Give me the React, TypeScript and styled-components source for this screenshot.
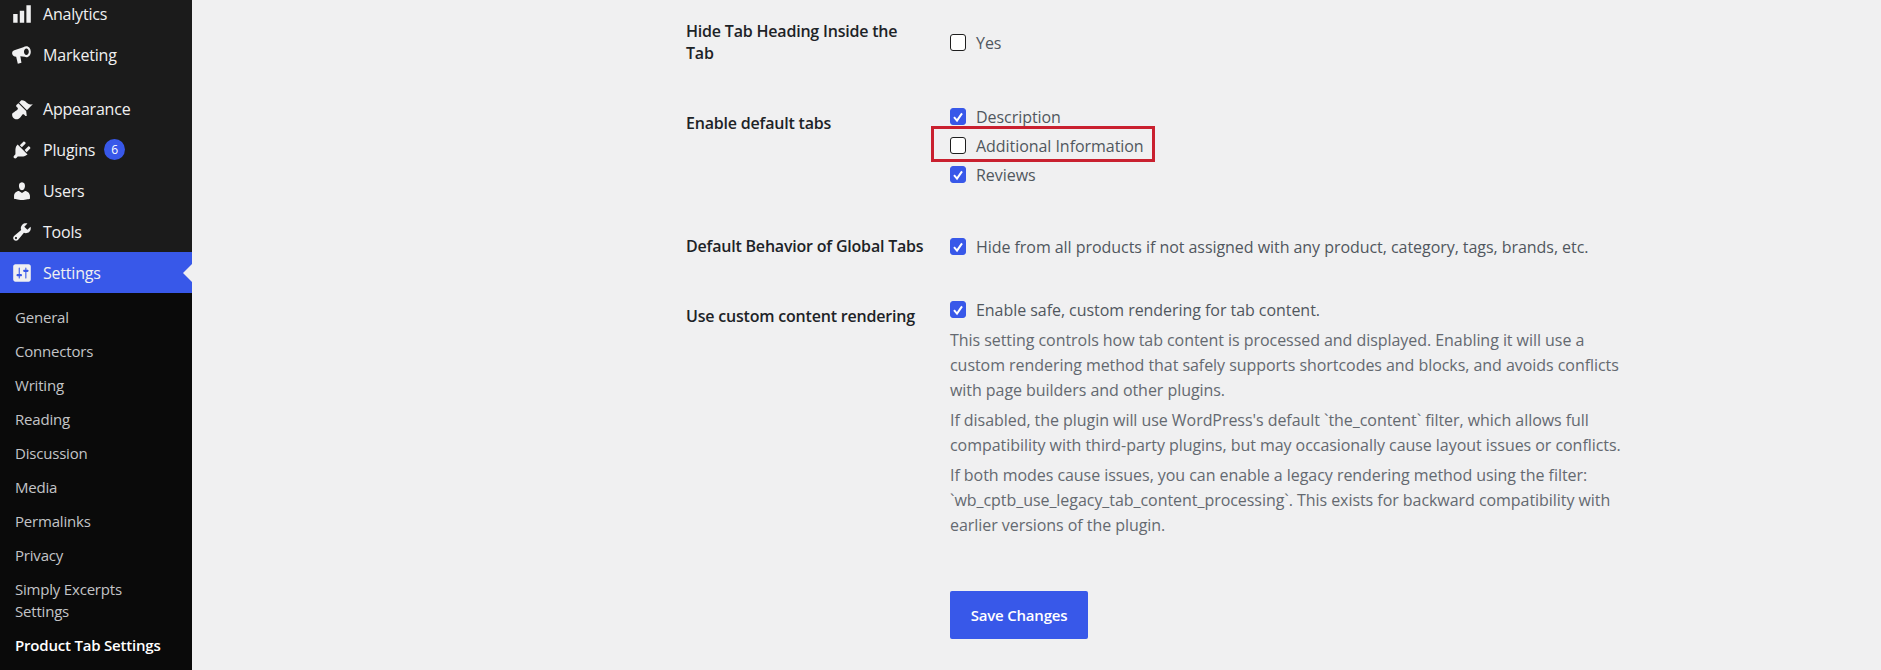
import React from 'react';
import styled, { createGlobalStyle } from 'styled-components';

const GlobalStyle = createGlobalStyle`
  html, body {
    margin: 0;
    height: 670px;
    overflow: hidden;
    background: #f0f0f1;
    font-family: 'Open Sans', 'Noto Sans', sans-serif;
  }
`;

const Page = styled.div`
  display: flex;
  height: 670px;
  overflow: hidden;
`;

const Sidebar = styled.aside`
  width: 192px;
  flex-shrink: 0;
  background: #1b1b1b;
  display: flex;
  flex-direction: column;
`;

const MainMenu = styled.ul`
  list-style: none;
  margin: -7px 0 0;
  padding: 0;
`;

const MenuItem = styled.li<{ $active?: boolean; $gap?: number }>`
  position: relative;
  display: flex;
  align-items: center;
  height: 41px;
  margin-top: ${p => p.$gap ?? 0}px;
  padding-left: 11px;
  gap: 10px;
  font-size: 16px;
  letter-spacing: -0.2px;
  color: #f0f0f1;
  background: ${p => (p.$active ? '#3858e9' : 'transparent')};
  ${p => p.$active && `
    &::after {
      content: '';
      position: absolute;
      right: 0;
      top: 50%;
      margin-top: -9px;
      border: 9px solid transparent;
      border-right-color: #f0f0f1;
      border-left: 0;
    }
  `}
`;

const MenuIcon = styled.svg`
  width: 22px;
  height: 22px;
  flex-shrink: 0;
  fill: #f0f0f1;
`;

const Badge = styled.span`
  display: inline-flex;
  align-items: center;
  justify-content: center;
  width: 21px;
  height: 21px;
  margin-left: -1px;
  border-radius: 50%;
  background: #3858e9;
  color: #fff;
  font-size: 12px;
  letter-spacing: 0;
`;

const SubMenu = styled.ul`
  list-style: none;
  flex: 1;
  margin: 0;
  padding: 13px 40px 0 15px;
  background: #0a0a0a;
`;

const SubItem = styled.li<{ $current?: boolean }>`
  padding: 0 0 12px;
  font-size: 15px;
  line-height: 22px;
  letter-spacing: -0.2px;
  white-space: ${p => (p.$current ? 'nowrap' : 'normal')};
  color: ${p => (p.$current ? '#fff' : '#c3c4c7')};
  font-weight: ${p => (p.$current ? 600 : 400)};
`;

const Content = styled.main`
  flex: 1;
  padding: 10px 0 0 494px;
  color: #1d2327;
`;

const Row = styled.section<{ $gap?: number }>`
  display: grid;
  grid-template-columns: 264px 690px;
  margin-top: ${p => p.$gap ?? 0}px;
`;

const FieldLabel = styled.div`
  padding-top: 10px;
  width: 241px;
  font-size: 16px;
  font-weight: 600;
  line-height: 22px;
  letter-spacing: -0.2px;
`;

const Field = styled.div<{ $offset?: number }>`
  padding-top: ${p => p.$offset ?? 0}px;
`;

const Option = styled.label<{ $marked?: boolean }>`
  position: relative;
  display: flex;
  align-items: center;
  gap: 10px;
  height: 29px;
  font-size: 16px;
  letter-spacing: -0.05px;
  color: #50575e;
  ${p => p.$marked && `
    &::after {
      content: '';
      position: absolute;
      left: -19px;
      top: -5px;
      width: 218px;
      height: 30px;
      border: 3px solid #c9202f;
    }
  `}
`;

const Box = styled.span<{ $checked?: boolean }>`
  display: flex;
  align-items: center;
  justify-content: center;
  box-sizing: border-box;
  width: 16px;
  height: 17px;
  flex-shrink: 0;
  border-radius: 3px;
  border: 1px solid ${p => (p.$checked ? '#3858e9' : '#1e1e1e')};
  background: ${p => (p.$checked ? '#3858e9' : '#fff')};
`;

const Help = styled.p`
  margin: 5px 0 0;
  font-size: 16px;
  line-height: 25px;
  letter-spacing: -0.05px;
  color: #646970;
`;

const HelpGroup = styled.div`
  margin-top: -1px;
`;

const SaveButton = styled.button`
  display: block;
  width: 138px;
  height: 48px;
  margin: 53px 0 0 264px;
  padding: 0;
  border: 0;
  border-radius: 2px;
  background: #3858e9;
  color: #fff;
  font-family: inherit;
  font-size: 15px;
  font-weight: 600;
  letter-spacing: -0.2px;
`;

const Checkbox = ({ checked }: { checked?: boolean }) => (
  <Box $checked={checked}>
    {checked && (
      <svg width="12" height="12" viewBox="0 0 12 12" fill="none">
        <path d="M2 6.2 5 9.6 10 2.4" stroke="#fff" strokeWidth="2" />
      </svg>
    )}
  </Box>
);

const icons: Record<string, React.ReactNode> = {
  analytics: <path d="M18 18V2h-4v16h4zm-6 0V7H8v11h4zm-6 0v-8H2v8h4z" />,
  marketing: (
    <path
      fillRule="evenodd"
      d="M14 2c2.3 0 4 2.2 4 5s-1.700 5-4 5c-.6 0-1.100-.1-1.600-.4l-3.900-.5 1 5.900-3.300 1-1.500-6.500-1.400-.1C2.100 10.800 1 9.600 1 8.300c0-1.200.8-2.200 2-2.600l8.200-2.800C12 2.300 13 2 14 2zm0 2c-1.200 0-2.200 1.300-2.200 3s1 3 2.200 3 2.200-1.300 2.200-3-1-3-2.200-3z"
    />
  ),
  appearance: (
    <path d="M14.48 11.060L7.410 3.990l1.500-1.500c.5-.56 2.300-.47 3.510.32 1.210.8 1.430 1.280 2.910 2.100 1.180.64 2.450 1.260 4.450.85zm-.71.71L6.700 4.700 4.930 6.470c-.39.39-.39 1.020 0 1.410l1.060 1.060c.39.39.39 1.030 0 1.420-.6.6-1.430 1.110-2.210 1.690-.35.26-.7.53-1.010.84C1.430 13.230 1 14.260 1 15.340c0 1.070.43 2.100 1.190 2.860.76.76 1.790 1.190 2.860 1.190 1.070 0 2.100-.43 2.860-1.190.31-.31.58-.66.84-1.010.58-.78 1.090-1.610 1.690-2.210.39-.39 1.030-.39 1.420 0l1.060 1.060c.39.39 1.020.39 1.410 0z" />
  ),
  plugins: (
    <path d="M13.110 4.360L9.870 7.600 8 5.730l3.240-3.240c.35-.34 1.050-.2 1.560.32.52.51.66 1.210.31 1.550zm-8 1.770l.91-1.120 9.010 9.010-1.190.84c-.71.71-2.630 1.160-3.820 1.160H6.140L4.900 17.260c-.59.59-1.540.59-2.120 0-.59-.58-.59-1.530 0-2.120l1.240-1.240v-3.880c0-1.130.4-3.190 1.090-3.890zm7.260 3.970l3.240-3.240c.34-.35 1.040-.21 1.550.31.52.51.66 1.210.31 1.550l-3.240 3.250z" />
  ),
  users: (
    <path d="M10 9.250c-2.270 0-2.730-3.440-2.730-3.440C7 4.020 7.820 2 9.970 2c2.160 0 2.980 2.020 2.710 3.810 0 0-.41 3.440-2.680 3.440zm0 2.570L12.720 10c2.390 0 4.520 2.330 4.520 4.530v2.490s-3.650 1.130-7.240 1.130c-3.650 0-7.240-1.130-7.240-1.130v-2.490c0-2.250 1.940-4.480 4.470-4.480z" />
  ),
  tools: (
    <path d="M16.680 9.770c-1.340 1.340-3.300 1.670-4.950.99l-5.410 6.520c-.99.99-2.590.99-3.580 0s-.99-2.590 0-3.570l6.520-5.420c-.68-1.650-.35-3.610.99-4.950 1.280-1.280 3.120-1.620 4.720-1.060l-2.890 2.890 2.820 2.820 2.860-2.870c.53 1.580.18 3.390-1.080 4.650zM3.810 16.210c.4.39 1.040.39 1.430 0 .4-.4.4-1.040 0-1.430-.39-.4-1.030-.4-1.430 0-.39.39-.39 1.030 0 1.430z" />
  ),
  settings: (
    <path d="M18 16V4c0-1.100-.9-2-2-2H4c-1.100 0-2 .9-2 2v12c0 1.100.9 2 2 2h12c1.100 0 2-.9 2-2zM8 11h1c.55 0 1 .45 1 1s-.45 1-1 1H8v1.500c0 .28-.22.5-.5.5s-.5-.22-.5-.5V13H6c-.55 0-1-.45-1-1s.45-1 1-1h1V5.500c0-.28.22-.5.5-.5s.5.22.5.5V11zm5-2h-1c-.55 0-1-.45-1-1s.45-1 1-1h1V5.500c0-.28.22-.5.5-.5s.5.22.5.5V7h1c.55 0 1 .45 1 1s-.45 1-1 1h-1v5.500c0 .28-.22.5-.5.5s-.5-.22-.5-.5V9z" />
  ),
};

const Icon = ({ name }: { name: string }) => <MenuIcon viewBox="0 0 20 20">{icons[name]}</MenuIcon>;

const submenu = ['General', 'Connectors', 'Writing', 'Reading', 'Discussion', 'Media', 'Permalinks', 'Privacy', 'Simply Excerpts Settings'];

const App = () => (
  <Page>
    <GlobalStyle />
    <Sidebar>
      <MainMenu>
        <MenuItem><Icon name="analytics" />Analytics</MenuItem>
        <MenuItem><Icon name="marketing" />Marketing</MenuItem>
        <MenuItem $gap={13}><Icon name="appearance" />Appearance</MenuItem>
        <MenuItem><Icon name="plugins" />Plugins <Badge>6</Badge></MenuItem>
        <MenuItem><Icon name="users" />Users</MenuItem>
        <MenuItem><Icon name="tools" />Tools</MenuItem>
        <MenuItem $active><Icon name="settings" />Settings</MenuItem>
      </MainMenu>
      <SubMenu>
        {submenu.map(item => <SubItem key={item}>{item}</SubItem>)}
        <SubItem $current>Product Tab Settings</SubItem>
      </SubMenu>
    </Sidebar>
    <Content>
      <Row>
        <FieldLabel>Hide Tab Heading Inside the Tab</FieldLabel>
        <Field $offset={18}>
          <Option><Checkbox />Yes</Option>
        </Field>
      </Row>
      <Row $gap={38}>
        <FieldLabel>Enable default tabs</FieldLabel>
        <Field>
          <Option><Checkbox checked />Description</Option>
          <Option $marked><Checkbox />Additional Information</Option>
          <Option><Checkbox checked />Reviews</Option>
        </Field>
      </Row>
      <Row $gap={36}>
        <FieldLabel>Default Behavior of Global Tabs</FieldLabel>
        <Field $offset={7}>
          <Option><Checkbox checked />Hide from all products if not assigned with any product, category, tags, brands, etc.</Option>
        </Field>
      </Row>
      <Row $gap={34}>
        <FieldLabel>Use custom content rendering</FieldLabel>
        <Field>
          <Option><Checkbox checked />Enable safe, custom rendering for tab content.</Option>
          <HelpGroup>
            <Help>This setting controls how tab content is processed and displayed. Enabling it will use a<br />custom rendering method that safely supports shortcodes and blocks, and avoids conflicts<br />with page builders and other plugins.</Help>
            <Help>If disabled, the plugin will use WordPress's default `the_content` filter, which allows full<br />compatibility with third-party plugins, but may occasionally cause layout issues or conflicts.</Help>
            <Help>If both modes cause issues, you can enable a legacy rendering method using the filter:<br />`wb_cptb_use_legacy_tab_content_processing`. This exists for backward compatibility with<br />earlier versions of the plugin.</Help>
          </HelpGroup>
        </Field>
      </Row>
      <SaveButton>Save Changes</SaveButton>
    </Content>
  </Page>
);

export default App;
